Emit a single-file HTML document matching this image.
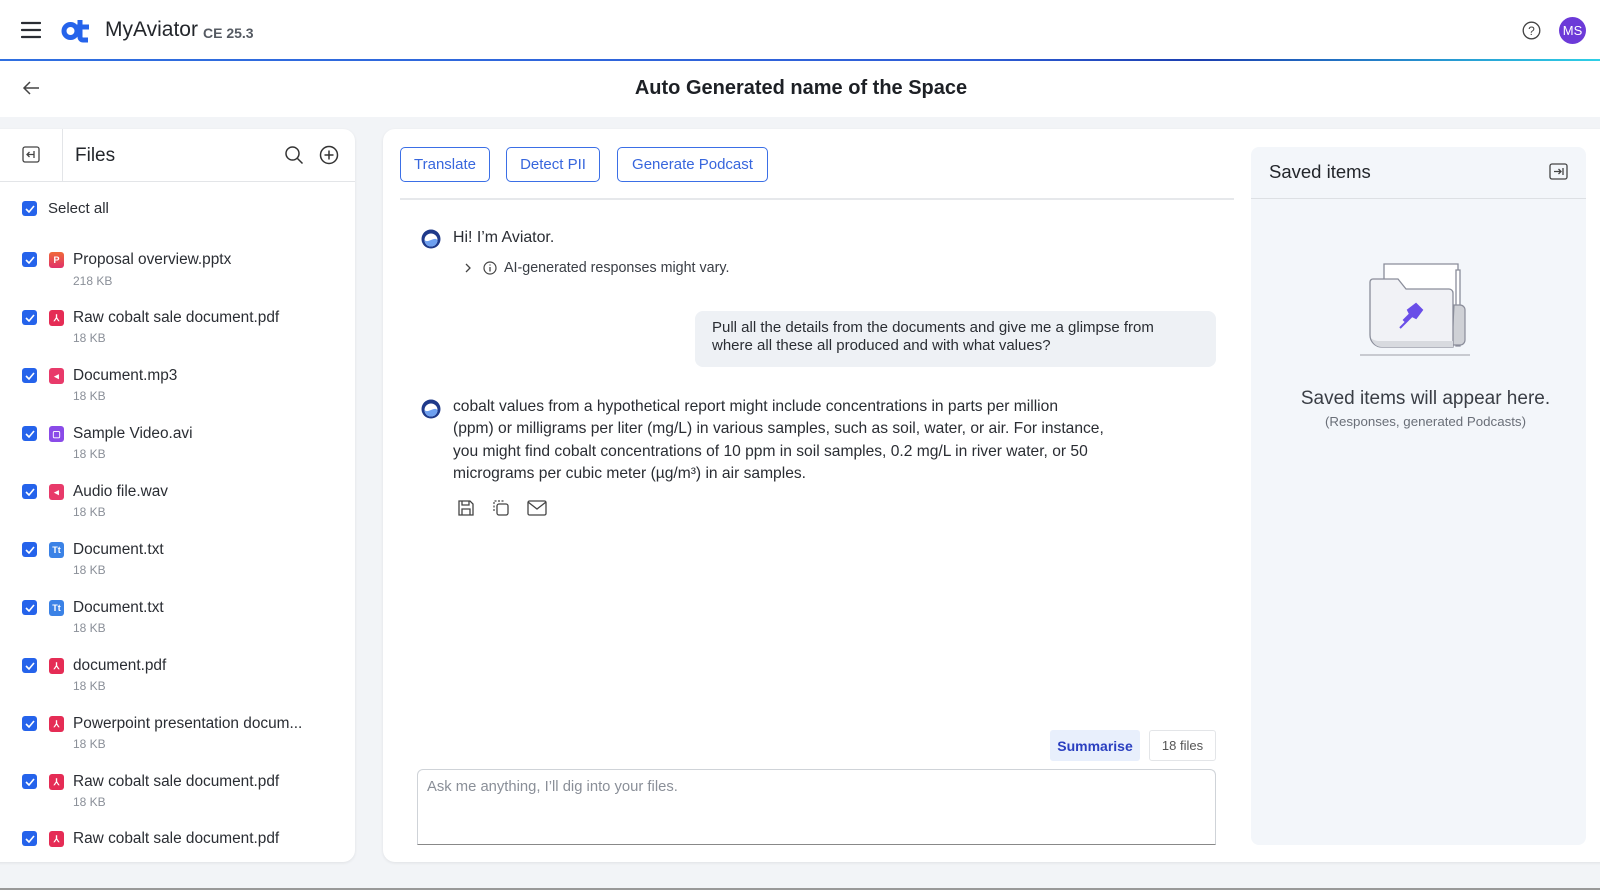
<!DOCTYPE html>
<html><head><meta charset="utf-8"><style>
*{box-sizing:border-box;margin:0;padding:0}
body{width:1600px;height:890px;overflow:hidden;background:#f2f4f7;font-family:"Liberation Sans",sans-serif;color:#23262b;position:relative}
.abs{position:absolute}
.hdr{left:0;top:0;width:1600px;height:59px;background:#fff}
.line{left:0;top:59px;width:1600px;height:2px;background:linear-gradient(90deg,#2f6fe0,#2f5fd8 60%,#1c3fb0 75%,#2fd0e6)}
.sub{left:0;top:61px;width:1600px;height:56px;background:#fff}
.panel{background:#fff;border-radius:12px;box-shadow:0 1px 3px rgba(0,0,0,.08)}
.cb{width:15px;height:15px;background:#2563eb;border-radius:3px;display:flex;align-items:center;justify-content:center}
.fi{width:15px;height:16px;border-radius:3px;color:#fff;font-size:9px;font-weight:bold;display:flex;align-items:center;justify-content:center}
.fname{font-size:15.4px;color:#2a2d33}
.fsz{font-size:12px;color:#8a8f98}
.btn{border:1.5px solid #3b6fe6;border-radius:5px;color:#3766dd;font-size:15px;height:35px;display:flex;align-items:center;justify-content:center;top:147px}
.msg{font-size:15.9px;line-height:22.3px;color:#2a2d33}
</style></head><body>
<div class="abs hdr"></div>
<div class="abs line"></div>
<div class="abs sub"></div>
<svg class="abs" style="left:21px;top:21px" width="20" height="18"><path d="M1 2h18M1 9h18M1 16h18" stroke="#2a2d33" stroke-width="2.2" stroke-linecap="round"/></svg>
<svg class="abs" style="left:61px;top:17px" width="31" height="26" viewBox="0 0 31 26"><circle cx="9.5" cy="14" r="6.5" fill="none" stroke="#2563eb" stroke-width="5"/><path d="M19 3v17a3 3 0 0 0 3 3h5M16 10h12" stroke="#2563eb" stroke-width="5" fill="none"/></svg>
<div class="abs" style="left:105px;top:18px;font-size:21px;color:#23262b">MyAviator</div>
<div class="abs" style="left:203px;top:25px;font-size:14px;color:#555a62;font-weight:bold">CE 25.3</div>
<svg class="abs" style="left:1522px;top:21px" width="19" height="19"><circle cx="9.5" cy="9.5" r="8.3" fill="none" stroke="#444" stroke-width="1.3"/><text x="9.5" y="14" font-size="12" text-anchor="middle" fill="#444" font-family="Liberation Sans">?</text></svg>
<div class="abs" style="left:1559px;top:17px;width:27px;height:27px;border-radius:50%;background:#6c3ad8;color:#fff;font-size:13px;display:flex;align-items:center;justify-content:center">MS</div>
<svg class="abs" style="left:22px;top:81px" width="18" height="14"><path d="M17 7H2M8 1L2 7l6 6" stroke="#444" stroke-width="1.5" fill="none"/></svg>
<div class="abs" style="left:0;width:1602px;top:77px;text-align:center;font-size:20px;font-weight:bold;color:#1d2025">Auto Generated name of the Space</div>

<div class="abs panel" style="left:-12px;top:129px;width:367px;height:733px;"></div>
<div class="abs" style="left:62px;top:129px;width:1px;height:52px;background:#e3e5e8"></div>
<div class="abs" style="left:0;top:181px;width:355px;height:1px;background:#e3e5e8"></div>
<svg class="abs" style="left:22px;top:146px" width="18" height="17"><rect x="1" y="1" width="16" height="15" rx="2" fill="none" stroke="#444" stroke-width="1.3"/><path d="M12 8.5H5M7.5 6L5 8.5 7.5 11M12 5v7" stroke="#444" stroke-width="1.3" fill="none"/></svg>
<div class="abs" style="left:75px;top:145px;font-size:19px;color:#23262b">Files</div>
<svg class="abs" style="left:284px;top:145px" width="20" height="20"><circle cx="8.5" cy="8.5" r="6.5" fill="none" stroke="#333" stroke-width="1.5"/><path d="M13.5 13.5l5 5" stroke="#333" stroke-width="1.5"/></svg>
<svg class="abs" style="left:319px;top:145px" width="20" height="20"><circle cx="10" cy="10" r="8.5" fill="none" stroke="#333" stroke-width="1.5"/><path d="M10 5.5v9M5.5 10h9" stroke="#333" stroke-width="1.5"/></svg>
<div class="abs cb" style="left:22px;top:201px"><svg width="10" height="8"><path d="M1 4l3 3 5-6" stroke="#fff" stroke-width="1.6" fill="none"/></svg></div>
<div class="abs" style="left:48px;top:200px;font-size:15px;color:#2a2d33">Select all</div>

<div class="abs cb" style="left:22px;top:252px"><svg width="10" height="8"><path d="M1 4l3 3 5-6" stroke="#fff" stroke-width="1.6" fill="none"/></svg></div>
<div class="abs fi" style="left:49px;top:252px;background:linear-gradient(#f06a3a,#e0306a)">P</div>
<div class="abs fname" style="left:73px;top:251px">Proposal overview.pptx</div><div class="abs fsz" style="left:73px;top:274px">218 KB</div>

<div class="abs cb" style="left:22px;top:310px"><svg width="10" height="8"><path d="M1 4l3 3 5-6" stroke="#fff" stroke-width="1.6" fill="none"/></svg></div>
<div class="abs fi" style="left:49px;top:310px;background:#e52c55">⅄</div>
<div class="abs fname" style="left:73px;top:309px">Raw cobalt sale document.pdf</div><div class="abs fsz" style="left:73px;top:331px">18 KB</div>

<div class="abs cb" style="left:22px;top:368px"><svg width="10" height="8"><path d="M1 4l3 3 5-6" stroke="#fff" stroke-width="1.6" fill="none"/></svg></div>
<div class="abs fi" style="left:49px;top:368px;background:#e83a6a">◂</div>
<div class="abs fname" style="left:73px;top:367px">Document.mp3</div><div class="abs fsz" style="left:73px;top:389px">18 KB</div>

<div class="abs cb" style="left:22px;top:426px"><svg width="10" height="8"><path d="M1 4l3 3 5-6" stroke="#fff" stroke-width="1.6" fill="none"/></svg></div>
<div class="abs fi" style="left:49px;top:426px;background:#8a4be8">▢</div>
<div class="abs fname" style="left:73px;top:425px">Sample Video.avi</div><div class="abs fsz" style="left:73px;top:447px">18 KB</div>

<div class="abs cb" style="left:22px;top:484px"><svg width="10" height="8"><path d="M1 4l3 3 5-6" stroke="#fff" stroke-width="1.6" fill="none"/></svg></div>
<div class="abs fi" style="left:49px;top:484px;background:#e83a6a">◂</div>
<div class="abs fname" style="left:73px;top:483px">Audio file.wav</div><div class="abs fsz" style="left:73px;top:505px">18 KB</div>

<div class="abs cb" style="left:22px;top:542px"><svg width="10" height="8"><path d="M1 4l3 3 5-6" stroke="#fff" stroke-width="1.6" fill="none"/></svg></div>
<div class="abs fi" style="left:49px;top:542px;background:#3b82e6">Tt</div>
<div class="abs fname" style="left:73px;top:541px">Document.txt</div><div class="abs fsz" style="left:73px;top:563px">18 KB</div>

<div class="abs cb" style="left:22px;top:600px"><svg width="10" height="8"><path d="M1 4l3 3 5-6" stroke="#fff" stroke-width="1.6" fill="none"/></svg></div>
<div class="abs fi" style="left:49px;top:600px;background:#3b82e6">Tt</div>
<div class="abs fname" style="left:73px;top:599px">Document.txt</div><div class="abs fsz" style="left:73px;top:621px">18 KB</div>

<div class="abs cb" style="left:22px;top:658px"><svg width="10" height="8"><path d="M1 4l3 3 5-6" stroke="#fff" stroke-width="1.6" fill="none"/></svg></div>
<div class="abs fi" style="left:49px;top:658px;background:#e52c55">⅄</div>
<div class="abs fname" style="left:73px;top:657px">document.pdf</div><div class="abs fsz" style="left:73px;top:679px">18 KB</div>

<div class="abs cb" style="left:22px;top:716px"><svg width="10" height="8"><path d="M1 4l3 3 5-6" stroke="#fff" stroke-width="1.6" fill="none"/></svg></div>
<div class="abs fi" style="left:49px;top:716px;background:#e52c55">⅄</div>
<div class="abs fname" style="left:73px;top:715px">Powerpoint presentation docum...</div><div class="abs fsz" style="left:73px;top:737px">18 KB</div>

<div class="abs cb" style="left:22px;top:774px"><svg width="10" height="8"><path d="M1 4l3 3 5-6" stroke="#fff" stroke-width="1.6" fill="none"/></svg></div>
<div class="abs fi" style="left:49px;top:774px;background:#e52c55">⅄</div>
<div class="abs fname" style="left:73px;top:773px">Raw cobalt sale document.pdf</div><div class="abs fsz" style="left:73px;top:795px">18 KB</div>

<div class="abs cb" style="left:22px;top:831px"><svg width="10" height="8"><path d="M1 4l3 3 5-6" stroke="#fff" stroke-width="1.6" fill="none"/></svg></div>
<div class="abs fi" style="left:49px;top:831px;background:#e52c55">⅄</div>
<div class="abs fname" style="left:73px;top:830px">Raw cobalt sale document.pdf</div>

<div class="abs panel" style="left:383px;top:129px;width:1230px;height:733px;"></div>
<div class="abs btn" style="left:400px;width:90px">Translate</div>
<div class="abs btn" style="left:506px;width:94px">Detect PII</div>
<div class="abs btn" style="left:617px;width:151px">Generate Podcast</div>
<div class="abs" style="left:400px;top:198px;width:834px;height:1.5px;background:#e6e8eb"></div>

<svg class="abs" style="left:420px;top:228px" width="22" height="22"><circle cx="11" cy="11" r="9.5" fill="#1f3a8a"/><circle cx="11" cy="12" r="6.5" fill="#fff"/><path d="M4.5 12a6.5 6.5 0 0 0 13 0c-2-2-4-1-6.5 0s-4.5 2-6.5 0z" fill="#6ea0f0"/></svg>
<div class="abs msg" style="left:453px;top:227px">Hi! I’m Aviator.</div>
<svg class="abs" style="left:464px;top:263px" width="8" height="10"><path d="M2 1l4 4-4 4" stroke="#444" stroke-width="1.3" fill="none"/></svg>
<svg class="abs" style="left:483px;top:261px" width="14" height="14"><circle cx="7" cy="7" r="6" fill="none" stroke="#444" stroke-width="1.2"/><path d="M7 6v4.5M7 3.5v1" stroke="#444" stroke-width="1.3"/></svg>
<div class="abs" style="left:504px;top:260px;font-size:14.3px;color:#3a3e45">AI-generated responses might vary.</div>

<div class="abs" style="left:695px;top:311px;width:521px;height:56px;background:#eef1f5;border-radius:8px"></div>
<div class="abs msg" style="left:712px;top:319px;font-size:15px;line-height:18px">Pull all the details from the documents and give me a glimpse from<br>where all these all produced and with what values?</div>

<svg class="abs" style="left:420px;top:398px" width="22" height="22"><circle cx="11" cy="11" r="9.5" fill="#1f3a8a"/><circle cx="11" cy="12" r="6.5" fill="#fff"/><path d="M4.5 12a6.5 6.5 0 0 0 13 0c-2-2-4-1-6.5 0s-4.5 2-6.5 0z" fill="#6ea0f0"/></svg>
<div class="abs msg" style="left:453px;top:396px;white-space:nowrap;font-size:15.6px">cobalt values from a hypothetical report might include concentrations in parts per million<br>(ppm) or milligrams per liter (mg/L) in various samples, such as soil, water, or air. For instance,<br>you might find cobalt concentrations of 10 ppm in soil samples, 0.2 mg/L in river water, or 50<br>micrograms per cubic meter (µg/m³) in air samples.</div>
<svg class="abs" style="left:457px;top:499px" width="18" height="18"><path d="M2 2h11l3 3v11H2z M5 2v4h7V2 M5 16v-6h8v6" stroke="#444" stroke-width="1.3" fill="none"/></svg>
<svg class="abs" style="left:492px;top:499px" width="18" height="18"><rect x="5" y="5" width="11" height="11" rx="2" fill="none" stroke="#444" stroke-width="1.3"/><path d="M2 12V2h10" stroke="#444" stroke-width="1.2" stroke-dasharray="2 1.5" fill="none"/></svg>
<svg class="abs" style="left:527px;top:500px" width="20" height="16"><rect x="1" y="1" width="18" height="14" rx="1.5" fill="none" stroke="#444" stroke-width="1.3"/><path d="M1 2l9 7 9-7" stroke="#444" stroke-width="1.3" fill="none"/></svg>

<div class="abs" style="left:1050px;top:730px;width:90px;height:31px;background:#e8effc;border-radius:3px;color:#2a3fc0;font-size:14px;font-weight:bold;display:flex;align-items:center;justify-content:center">Summarise</div>
<div class="abs" style="left:1149px;top:730px;width:67px;height:31px;background:#fff;border:1px solid #e3e5e8;border-radius:3px;color:#555;font-size:13px;display:flex;align-items:center;justify-content:center">18 files</div>
<div class="abs" style="left:417px;top:769px;width:799px;height:76px;border:1px solid #cfd3d8;border-bottom:1.5px solid #888;border-radius:6px 6px 0 0;background:#fff"></div>
<div class="abs" style="left:427px;top:779px;font-size:14.8px;color:#8a8f98">Ask me anything, I’ll dig into your files.</div>

<div class="abs" style="left:1251px;top:147px;width:335px;height:698px;background:#f3f6fa;border-radius:8px"></div>
<div class="abs" style="left:1251px;top:198px;width:335px;height:1px;background:#dde0e4"></div>
<div class="abs" style="left:1269px;top:161px;font-size:18.5px;color:#23262b">Saved items</div>
<svg class="abs" style="left:1549px;top:163px" width="19" height="17"><rect x="1" y="1" width="17" height="15" rx="2" fill="none" stroke="#444" stroke-width="1.3"/><path d="M5 8.5h7M9.5 6L12 8.5 9.5 11M14 5v7" stroke="#444" stroke-width="1.3" fill="none"/></svg>
<svg class="abs" style="left:1360px;top:260px" width="110" height="100" viewBox="0 0 110 100"><path d="M24 4h74v80H24z" fill="#fff" stroke="#8a8d9a" stroke-width="1.3"/><path d="M96 10h4v76h-4z" fill="#fff" stroke="#8a8d9a" stroke-width="1.3"/><path d="M94 45h6a5 5 0 0 1 5 5v30a5 5 0 0 1-5 5h-8z" fill="#cfd1d6" stroke="#8a8d9a" stroke-width="1.2"/><path d="M10 22a3 3 0 0 1 3-3h25l8 10h43a4 4 0 0 1 4 4v54H22a12 12 0 0 1-12-12z" fill="#f1f2f6" stroke="#8a8d9a" stroke-width="1.3"/><path d="M11 78c2 6 6 9 11 9h71v-6H20c-4 0-7-1-9-3z" fill="#d8dadf"/><path d="M0 95h110" stroke="#c8cad0" stroke-width="2"/><path d="M44 60l6-6-2-4 8-6 6 6-6 8-4-2-6 6z M40 68l8-8" fill="#6a4ee8" stroke="#6a4ee8" stroke-width="2"/></svg>
<div class="abs" style="left:1258px;width:335px;top:388px;text-align:center;font-size:19px;color:#3a3e45">Saved items will appear here.</div>
<div class="abs" style="left:1258px;width:335px;top:414px;text-align:center;font-size:13.3px;color:#6a6f78">(Responses, generated Podcasts)</div>

<div class="abs" style="left:0;top:888px;width:1600px;height:2px;background:#999"></div>
</body></html>
